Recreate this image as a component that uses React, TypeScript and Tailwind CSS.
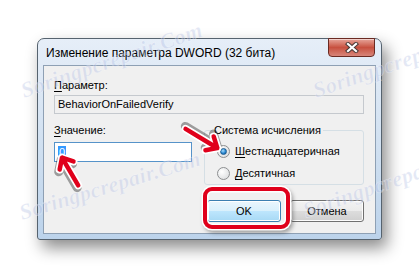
import React from 'react';

const font = { fontFamily: '"Liberation Sans", Arial, sans-serif' };

function Radio({ checked, label, hotkey }: { checked?: boolean; label: string; hotkey: string }) {
  return (
    <div className="flex items-center h-[15px]">
      <span className="w-[13px] h-[13px] rounded-full border border-[#8d8f91] bg-[radial-gradient(circle_at_35%_35%,#ffffff,#d6d8da)] flex items-center justify-center shrink-0">
        {checked && (
          <span className="w-[7px] h-[7px] rounded-full bg-[radial-gradient(circle_at_40%_35%,#a9dcfb,#2a8ad4_55%,#0b4f8c)] border border-[#1d5c91]" />
        )}
      </span>
      <span className="ml-[5px] text-[11px] leading-[15px] text-black">
        <span className="underline underline-offset-2">{hotkey}</span>
        {label}
      </span>
    </div>
  );
}

function CloseGlyph() {
  return (
    <svg width="16" height="11" viewBox="0 0 16 11">
      <path d="M4 2 L12 9 M12 2 L4 9" stroke="#4a3a38" strokeWidth="4.2" strokeLinecap="square" />
      <path d="M4 2 L12 9 M12 2 L4 9" stroke="#ffffff" strokeWidth="2.2" strokeLinecap="square" />
    </svg>
  );
}

function Arrow({ x, y, len, angle }: { x: number; y: number; len: number; angle: number }) {
  const d = `M ${len} 0 L 2 0 M 11 -8 L 2 0 L 11 8`;
  return (
    <g transform={`translate(${x} ${y}) rotate(${angle})`}>
      <path d={d} stroke="rgba(0,0,0,0.35)" strokeWidth="9" fill="none" strokeLinecap="round" strokeLinejoin="round" transform="translate(1.5 2)" />
      <path d={d} stroke="#ffffff" strokeWidth="8" fill="none" strokeLinecap="round" strokeLinejoin="round" />
      <path d={d} stroke="#e0001b" strokeWidth="4.5" fill="none" strokeLinecap="round" strokeLinejoin="round" />
    </g>
  );
}

function Watermark({ x, y, angle, w }: { x: number; y: number; angle: number; w: number }) {
  return (
    <text
      transform={`translate(${x} ${y}) rotate(${angle})`}
      fontFamily='"Liberation Serif", serif'
      fontStyle="italic"
      fontWeight="bold"
      fontSize="22"
      textLength={w}
      fill="#a8b6e0"
      fillOpacity="0.32"
      stroke="#ffffff"
      strokeOpacity="0.4"
      strokeWidth="0.6"
    >
      Soringpcrepair.Com
    </text>
  );
}

export default function App() {
  return (
    <div className="relative w-[419px] h-[279px] overflow-hidden bg-white" style={font}>
      <div className="pl-[37px] pt-[38px]">
        <div className="w-[345px] h-[202px] flex flex-col rounded-t-[7px] rounded-b-[3px] border border-[#56636f] bg-gradient-to-b from-[#e6eef8] via-[#d2e1f1] to-[#bcd3eb] px-[5px] pb-[5px] shadow-[5px_8px_16px_rgba(0,0,0,0.45)]">
          <div className="h-[26px] flex items-start justify-between">
            <span className="pl-[3px] pt-[7px] text-[12px] leading-[15px] text-black">
              Изменение параметра DWORD (32 бита)
            </span>
            <div className="mr-[1px] -mt-px w-[47px] h-[19px] rounded-b-[4px] border border-[#6a2a22] bg-gradient-to-b from-[#e6a59b] via-[#c7503f] to-[#d7857a] flex items-center justify-center shadow-[inset_0_1px_0_rgba(255,255,255,0.5)]">
              <CloseGlyph />
            </div>
          </div>

          <div className="flex-1 border border-[#8ea0b4] bg-[#f0f0f0] pl-[10px] pr-[11px] pt-[12px] flex flex-col">
            <div className="text-[11px] leading-[15px] text-black">
              <span className="underline underline-offset-2">П</span>араметр:
            </div>
            <div className="mt-[2px] h-[19px] border border-[#c5c9ce] bg-[#f0f0f0] flex items-center pl-[3px] text-[11px] text-black">
              BehaviorOnFailedVerify
            </div>

            <div className="mt-[9px] flex gap-[12px]">
              <div className="w-[138px] flex flex-col">
                <div className="text-[11px] leading-[15px] text-black">
                  <span className="underline underline-offset-2">З</span>начение:
                </div>
                <div className="mt-[4px] h-[20px] border border-[#5693c9] bg-white flex items-center pl-[3px]">
                  <span className="bg-[#3399ff] text-white text-[11px] leading-[13px] px-px">0</span>
                </div>
              </div>

              <div className="relative mt-[7px] w-[160px] h-[55px] border border-[#d5dfe5] rounded-[3px] pl-[12px] pt-[13px] flex flex-col gap-[7px]">
                <span className="absolute -top-[8px] left-[7px] px-[2px] bg-[#f0f0f0] text-[11px] leading-[15px] text-black">
                  Система исчисления
                </span>
                <Radio checked hotkey="Ш" label="естнадцатеричная" />
                <Radio hotkey="Д" label="есятичная" />
              </div>
            </div>

            <div className="mt-[15px] flex justify-end gap-[9px]">
              <button className="w-[74px] h-[22px] rounded-[3px] border border-[#3c7fb1] bg-[linear-gradient(#eaf6fd_0%,#d9f0fc_50%,#bee6fd_50%,#a7d9f5_100%)] text-[11px] text-black shadow-[inset_0_0_0_1px_#ffffff]">
                OK
              </button>
              <button className="w-[74px] h-[22px] rounded-[3px] border border-[#707070] bg-[linear-gradient(#f2f2f2_0%,#ebebeb_50%,#dddddd_50%,#cfcfcf_100%)] text-[11px] text-black shadow-[inset_0_0_0_1px_#fcfcfc]">
                Отмена
              </button>
            </div>
          </div>
        </div>
      </div>

      <div className="absolute left-[203px] top-[187px] w-[87px] h-[42px] rounded-[9px] border-4 border-[#e0001b] shadow-[0_0_0_1.5px_#ffffff,inset_0_0_0_1.5px_#ffffff,2px_3px_4px_1px_rgba(0,0,0,0.35)]" />

      <svg className="absolute inset-0" width="419" height="279" viewBox="0 0 419 279">
        <Arrow x={61} y={156} len={34} angle={59.6} />
        <Arrow x={219} y={149} len={39} angle={211} />
        <Watermark x={24} y={98} angle={-19} w={190} />
        <Watermark x={22} y={220} angle={-17} w={188} />
        <Watermark x={316} y={98} angle={-19} w={190} />
        <Watermark x={306} y={218} angle={-19} w={190} />
      </svg>
    </div>
  );
}
